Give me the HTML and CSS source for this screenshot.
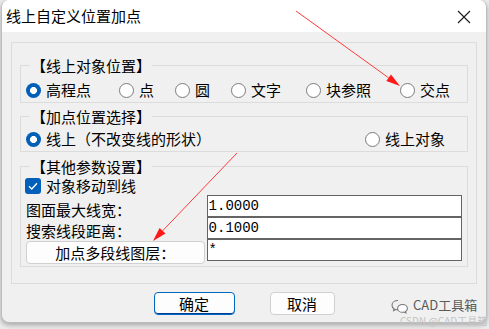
FILE: index.html
```html
<!DOCTYPE html>
<html lang="zh-CN">
<head>
<meta charset="utf-8">
<title>线上自定义位置加点</title>
<link rel="stylesheet" href="styles.css">
</head>
<body>
<div class="win">
  <div class="titlebar">
    <span class="title">线上自定义位置加点</span>
    <svg class="close" width="14" height="14" viewBox="0 0 14 14"><path d="M1 1 L13 13 M13 1 L1 13" stroke="#1a1a1a" stroke-width="1.1" fill="none"/></svg>
  </div>
  <div class="client">
    <div class="outer">
      <fieldset class="grp g1">
        <legend>【线上对象位置】</legend>
        <div class="row r1">
          <label class="opt"><span class="radio on"></span>高程点</label>
          <label class="opt"><span class="radio"></span>点</label>
          <label class="opt"><span class="radio"></span>圆</label>
          <label class="opt"><span class="radio"></span>文字</label>
          <label class="opt"><span class="radio"></span>块参照</label>
          <label class="opt"><span class="radio"></span>交点</label>
        </div>
      </fieldset>
      <fieldset class="grp g2">
        <legend>【加点位置选择】</legend>
        <div class="row r2">
          <label class="opt"><span class="radio on"></span>线上（不改变线的形状）</label>
          <label class="opt"><span class="radio"></span>线上对象</label>
        </div>
      </fieldset>
      <fieldset class="grp g3">
        <legend>【其他参数设置】</legend>
        <label class="chkrow"><span class="chk"><svg width="16" height="16" viewBox="0 0 16 16"><path d="M4 8.3 L6.8 11 L12 5.3" stroke="#fff" stroke-width="1.3" fill="none"/></svg></span>对象移动到线</label>
        <div class="cols">
          <div class="left">
            <span class="lbl">图面最大线宽：</span>
            <span class="lbl">搜索线段距离：</span>
            <button class="layer">加点多段线图层：</button>
          </div>
          <div class="right">
            <div class="inp">1.0000</div>
            <div class="inp">0.1000</div>
            <div class="inp">*</div>
          </div>
        </div>
      </fieldset>
    </div>
    <div class="btns">
      <button class="btn primary">确定</button>
      <button class="btn cancel">取消</button>
    </div>
  </div>
</div>
<div class="wm">
  <svg class="wx" width="18" height="15" viewBox="0 0 18 15"><path d="M7 1.5 C3.5 1.5 1 3.6 1 6.2 C1 7.7 1.8 9 3.1 9.8 L2.6 11.6 L4.7 10.5 C5.4 10.7 6.2 10.8 7 10.8" stroke="#777" stroke-width="1.1" fill="none"/><path d="M11.5 5.5 C8.7 5.5 6.6 7.3 6.6 9.4 C6.6 11.5 8.7 13.3 11.5 13.3 C12.1 13.3 12.6 13.2 13.1 13.1 L14.9 14 L14.5 12.4 C15.7 11.7 16.4 10.6 16.4 9.4 C16.4 7.3 14.3 5.5 11.5 5.5 Z" stroke="#777" stroke-width="1.1" fill="#fff"/></svg>
  <span class="wm1">CAD工具箱</span>
  <span class="wm2">CSDN @CAD工具箱</span>
</div>
<svg class="arrows" width="489" height="329" viewBox="0 0 489 329">
  <line x1="296" y1="11" x2="388.6" y2="77.8" stroke="#ff3b3b" stroke-width="1"/>
  <polygon points="400,86 386.3,81 391,74.6" fill="#ff1a1a"/>
  <line x1="237" y1="153" x2="162.6" y2="230.8" stroke="#ff3b3b" stroke-width="1"/>
  <polygon points="153,241 159.6,228 165.5,233.5" fill="#ff1a1a"/>
</svg>
</body>
</html>
```
FILE: styles.css
```css
html, body {
  margin: 0;
  padding: 0;
}
body {
  width: 489px;
  height: 329px;
  overflow: hidden;
  position: relative;
  background: #ebebeb;
  font-family: "Noto Sans CJK SC", "Microsoft YaHei", sans-serif;
  font-size: 15px;
  color: #000;
}
.win {
  margin-left: 1px;
  width: 486px;
  height: 323px;
  box-sizing: border-box;
  border: 1px solid #bdbdbd;
  border-top: 0;
  border-radius: 8px;
  background: #f0f0f0;
  box-shadow: 0 2px 5px rgba(0, 0, 0, 0.3);
  overflow: hidden;
}
.titlebar {
  height: 32px;
  background: #fff;
  display: flex;
  align-items: center;
  justify-content: space-between;
  padding: 0 15px 0 4px;
}
.title {
  font-size: 15px;
  line-height: 20px;
}
.close {
  display: block;
  margin-top: 1px;
}
.outer {
  margin: 10px 0 0 9px;
  width: 466px;
  box-sizing: border-box;
  border: 1px solid #dcdcdc;
  padding: 13px 8px 16px 8px;
}
.grp {
  border: 1px solid #dcdcdc;
  margin: 0;
  padding: 0 5px 2px;
  min-width: 0;
}
.grp legend {
  margin-left: 4px;
  padding: 0 1px;
  line-height: 19px;
  height: 19px;
}
.g2 { margin-top: 4px; }
.g3 { margin-top: 5px; }
.row {
  display: grid;
  align-items: center;
  height: 20px;
}
.r1 {
  padding-top: 5px;
  grid-template-columns: 93px 56px 56px 75px 94px auto;
}
.r2 {
  padding-top: 3px;
  grid-template-columns: 339px auto;
}
.opt {
  display: flex;
  align-items: center;
  gap: 5px;
  line-height: 20px;
  white-space: nowrap;
}
.radio {
  width: 15px;
  height: 15px;
  box-sizing: border-box;
  border-radius: 50%;
  border: 1px solid #7b7b7b;
  background: #fff;
  flex: none;
}
.radio.on {
  border: 0;
  background: radial-gradient(circle, #fff 0 3.2px, #005fb8 3.8px);
}
.chkrow {
  display: flex;
  align-items: center;
  gap: 5px;
  height: 19px;
  margin-left: -1px;
  line-height: 19px;
}
.chk {
  width: 16px;
  height: 16px;
  border-radius: 3px;
  background: #005fb8;
  flex: none;
}
.chk svg { display: block; }
.cols {
  display: flex;
  align-items: flex-start;
}
.left {
  width: 179px;
  margin-top: 4px;
  display: flex;
  flex-direction: column;
}
.lbl {
  height: 21px;
  line-height: 21px;
}
.layer {
  height: 23px;
  margin: 0;
  padding: 0;
  border: 1px solid #d0d0d0;
  border-radius: 4px;
  background: #fdfdfd;
  font-family: "Noto Sans CJK SC", sans-serif;
  font-size: 15px;
  color: #000;
  line-height: 20px;
}
.right {
  margin-left: 2px;
  width: 256px;
}
.inp {
  height: 22px;
  box-sizing: border-box;
  border: 1px solid #646464;
  background: #fff;
  font-family: "Liberation Mono", monospace;
  font-size: 14px;
  line-height: 20px;
  padding-left: 1px;
}
.btns {
  margin-top: 8px;
  display: flex;
  justify-content: center;
  gap: 35px;
}
.btn {
  height: 23px;
  margin: 0;
  padding: 0;
  border-radius: 4px;
  background: #fdfdfd;
  font-family: "Noto Sans CJK SC", sans-serif;
  font-size: 15px;
  line-height: 20px;
  color: #000;
}
.primary {
  width: 81px;
  border: 1px solid #0067c0;
  box-shadow: inset 0 -1px 0 #003e92;
}
.cancel {
  width: 65px;
  border: 1px solid #d0d0d0;
}
.wm {
  position: absolute;
  left: 391px;
  top: 297px;
  width: 98px;
  height: 32px;
}
.wx {
  position: absolute;
  left: 0;
  top: 2px;
}
.wm1 {
  position: absolute;
  left: 22px;
  top: 0;
  font-size: 13px;
  line-height: 15px;
  color: #5a5a5a;
  white-space: nowrap;
}
.wm2 {
  position: absolute;
  left: 9px;
  top: 18px;
  font-size: 10px;
  line-height: 12px;
  color: #c4c4c4;
  white-space: nowrap;
}
.arrows {
  position: absolute;
  left: 0;
  top: 0;
  pointer-events: none;
}
```
